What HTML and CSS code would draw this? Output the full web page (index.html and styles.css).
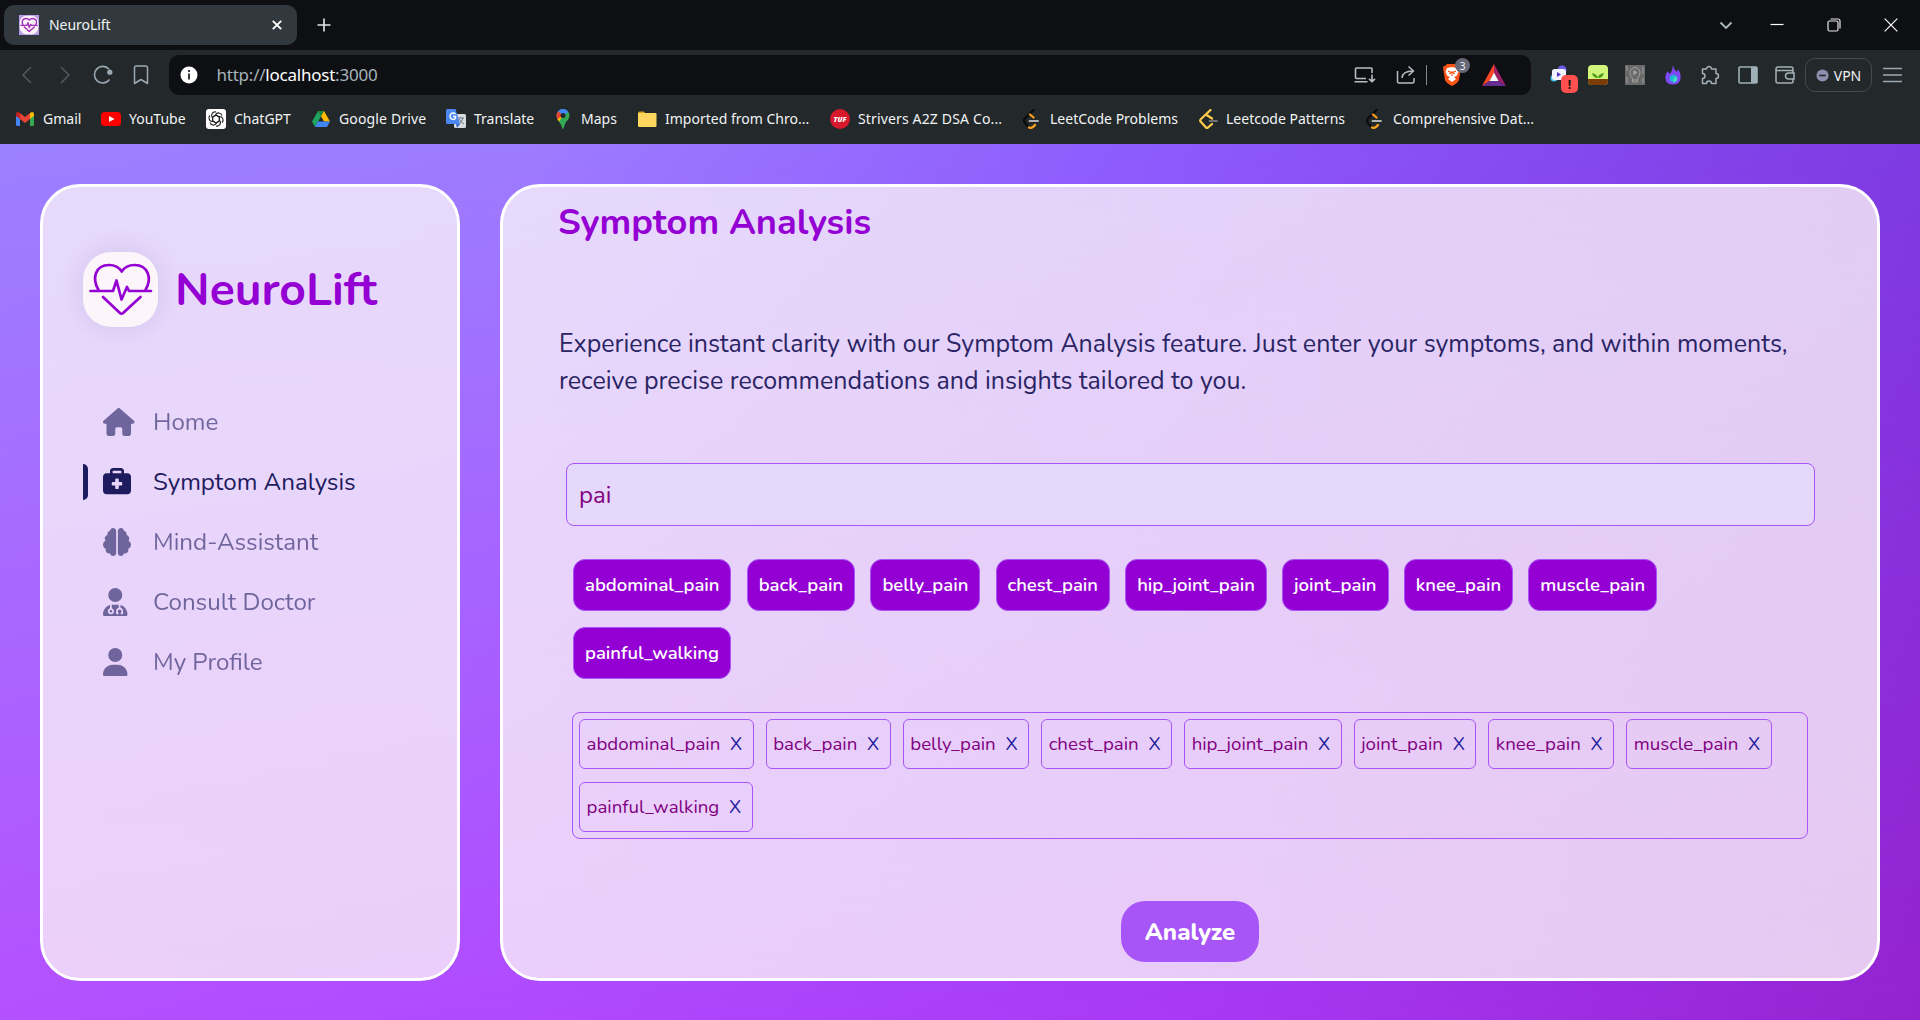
FILE: index.html
```html
<!DOCTYPE html>
<html lang="en">
<head>
<meta charset="utf-8">
<title>NeuroLift</title>
<link rel="stylesheet" href="styles.css">
</head>
<body>
<header class="browser">
  <div class="tabstrip">
    <div class="tab">
      <svg class="favicon" viewBox="0 0 75 75"><rect width="75" height="75" fill="#b79be6"/><rect x="3" y="3" width="69" height="69" rx="24" fill="#fbf1f8"/><g fill="none" stroke="#a02bb8" stroke-width="5" stroke-linecap="round" stroke-linejoin="round"><path d="M15.500 38C8.500 26 12.500 13 26 13Q34.500 13 38.700 19.500Q43 13 51.500 13C65 13 69.500 26 62.500 38M7 39H30L33.500 29L38.500 47L44 35L46 39H68M20 45L38.500 62L57.500 45"/></g></svg>
      <span class="tab-title">NeuroLift</span>
      <svg class="tab-close" viewBox="0 0 10 10"><path d="M.8.8L9.200 9.200M9.200.8L.8 9.200" stroke="#fff" stroke-width="1.900"/></svg>
    </div>
    <svg class="new-tab" viewBox="0 0 14 14"><path d="M7 .5V13.500M.5 7H13.500" stroke="#e6e8ea" stroke-width="1.600"/></svg>
    <div class="window-controls">
      <svg viewBox="0 0 14 14"><path d="M1.500 4.500L7 10L12.500 4.500" fill="none" stroke="#a9b6bd" stroke-width="1.900"/></svg>
      <svg viewBox="0 0 14 14"><path d="M.5 6.500H13.500" stroke="#fff" stroke-width="1.200"/></svg>
      <svg viewBox="0 0 14 14" fill="none" stroke="#e8e8e8" stroke-width="1.200"><rect x="1" y="3" width="10" height="10" rx="1.500"/><path d="M3.500 1H11A2 2 0 0 1 13 3V10.500"/></svg>
      <svg viewBox="0 0 14 14"><path d="M.7.7L13.300 13.300M13.300.7L.7 13.300" stroke="#fff" stroke-width="1.200"/></svg>
    </div>
  </div>

  <div class="toolbar">
    <div class="nav-buttons">
      <svg viewBox="0 0 20 20"><path d="M14 2L6 10L14 18" fill="none" stroke="#51595e" stroke-width="1.500"/></svg>
      <svg viewBox="0 0 20 20"><path d="M6 2L14 10L6 18" fill="none" stroke="#51595e" stroke-width="1.500"/></svg>
      <svg viewBox="0 0 20 20"><path d="M16.500 14.500A8.300 8.300 0 1 1 16 4.200" fill="none" stroke="#9aa9b1" stroke-width="1.600"/><circle cx="16.800" cy="7.200" r="2.600" fill="#9aa9b1"/></svg>
      <svg viewBox="0 0 20 20"><path d="M3.500 3Q3.500 1 5.500 1H14.500Q16.500 1 16.500 3V18.500L10 14.500L3.500 18.500Z" fill="none" stroke="#9aa9b1" stroke-width="1.500" stroke-linejoin="round"/></svg>
    </div>
    <div class="address">
      <svg class="info" viewBox="0 0 18 18"><circle cx="9" cy="9" r="8.500" fill="#fff"/><path d="M9 4V6M9 7.500V13.500" stroke="#23282b" stroke-width="1.800"/></svg>
      <span class="url">http://<b>localhost</b>:3000</span>
      <svg class="act-install" viewBox="0 0 22 20" fill="none" stroke="#b9bcc2" stroke-width="1.600"><path d="M12 13.500H2.500Q1.500 13.500 1.500 12.500V4Q1.500 3 2.500 3H17Q18 3 18 4V8M.500 16.700H13.500M18 9.500V16.500M15 13.800L18 16.700L21 13.800"/></svg>
      <svg class="act-share" viewBox="0 0 20 20" fill="none" stroke="#b9bcc2" stroke-width="1.500"><path d="M1.500 6V16.500Q1.500 18 3 18H16.500Q18 18 18 16.500V13M6 13Q6.500 6 17 6M12.500 1.500L17.500 6L12.500 10.500"/></svg>
      <span class="divider"></span>
      <span class="shield"><svg viewBox="0 0 20 24"><path d="M5 1H15L17 3L19 3.500L18.500 8L17 17Q16 20 10 23Q4 20 3 17L1.500 8L1 3.500L3 3Z" fill="#fb5216"/><path d="M10 4L15 5L16.500 9L14.500 13L12 14L14 16L10 19L6 16L8 14L5.500 13L3.500 9L5 5Z" fill="#fff"/><path d="M6 8L9 9.500L7.500 11M14 8L11 9.500L12.500 11M10 8V13" stroke="#fb5216" fill="none" stroke-width="1.100"/></svg><i>3</i></span>
      <svg class="act-bat" viewBox="0 0 24 22"><path d="M12 0L0 22L7.500 17L12 8.500Z" fill="#ff4724"/><path d="M12 0L24 22L16.500 17L12 8.500Z" fill="#9e1f63"/><path d="M0 22H24L16.500 17H7.500Z" fill="#662d91"/><path d="M12 8.500L16.500 17H7.500Z" fill="#fff"/></svg>
    </div>
    <div class="extensions">
      <span class="ext-alert"><svg viewBox="0 0 20 20"><circle cx="12" cy="5" r="4.500" fill="#6b5cf0"/><circle cx="4" cy="13" r="3.500" fill="#4fc3f2"/><rect x="2" y="4" width="14" height="11" rx="2.500" fill="#f1f3ff"/><path d="M7 7L11 9.500L7 12Z" fill="#5632c9"/></svg><i>!</i></span>
      <svg viewBox="0 0 20 20"><rect width="20" height="20" rx="4" fill="#d0f57a"/><path d="M0 14H20V16Q20 20 16 20H4Q0 20 0 16Z" fill="#7a3d08"/><path d="M10 13Q9 9 4 8Q5 13 10 13Q10 9 16 8Q15 13 10 13Z" fill="#4a9a1c"/></svg>
      <svg viewBox="0 0 20 20"><rect width="20" height="20" fill="#6b6a6a"/><g fill="none" stroke="#a19f9f"><path d="M7.500 13.500Q5 11 5 7.500A5 5 0 0 1 15 7.500Q15 11 12.500 13.500V17H7.500ZM7.500 15H12.500M2 1V6M2 12V18M18 2V9M18 13V18"/><path d="M8.800 5.500V9.500L12 7.500Z" fill="#a19f9f"/></g></svg>
      <svg viewBox="0 0 20 22"><path d="M9.500 0Q10.500 4 14 7.500Q15.500 6 15.500 4Q19 9 18.500 14Q17.500 21.500 10 21.500Q2 21.500 1.500 14Q1.500 10 4 7Q5 9 6.500 9.500Q10 6 9.500 0Z" fill="#7f48f5"/><path d="M10.500 10.500L14.500 12.500V17L10.500 19.500L6.500 17V12.500Z" fill="#22b6d6"/><path d="M10.500 14.500L14.500 12.500V17L10.500 19.500Z" fill="#42e0c4"/></svg>
      <svg viewBox="0 0 20 20"><path d="M3.500 4H6.500A2.500 2.500 0 1 1 11.500 4H16V8.500A2.500 2.500 0 1 1 16 13.500V18.500H11.500A2.500 2.500 0 0 0 6.500 18.500H2.500V13.500A2.500 2.500 0 0 0 2.500 8.500V4Z" fill="none" stroke="#a3b0b7" stroke-width="1.500" stroke-linejoin="round"/></svg>
      <svg viewBox="0 0 20 20"><rect x="1" y="2" width="18" height="16" rx="1" fill="none" stroke="#9fb0b8" stroke-width="1.600"/><path d="M13 2H19V18H13Z" fill="#9fb0b8"/></svg>
      <svg viewBox="0 0 20 20" fill="none" stroke="#a3b0b7" stroke-width="1.500"><path d="M18 6V4Q18 2 16 2H3Q1 2 1 4V16Q1 18 3 18H16Q18 18 18 16.500V14M1 5.500H16Q18 5.500 18 7V8M19 8H13.500A3 3 0 0 0 13.500 14H19Z"/></svg>
    </div>
    <div class="vpn"><svg viewBox="0 0 14 14"><circle cx="7" cy="7" r="6.500" fill="#8e8fae"/><path d="M3.500 7H10.500" stroke="#23282b" stroke-width="1.800"/></svg><span>VPN</span></div>
    <svg class="menu" viewBox="0 0 20 16"><path d="M0 1.500H19M0 8H19M0 14.500H19" stroke="#9aa9b1" stroke-width="1.500"/></svg>
  </div>

  <nav class="bookmarks">
    <a><svg viewBox="0 0 20 20"><path d="M1 4.500V15.500Q1 17 2.500 17H5V9Z" fill="#4285f4"/><path d="M19 4.500V15.500Q19 17 17.500 17H15V9Z" fill="#34a853"/><path d="M1 5Q1 3 3 3L5 4V10L1 7Z" fill="#c5221f"/><path d="M19 5Q19 3 17 3L15 4V10L19 7Z" fill="#fbbc04"/><path d="M5 4L10 8L15 4V10L10 14L5 10Z" fill="#ea4335"/></svg><span>Gmail</span></a>
    <a><svg viewBox="0 0 20 20"><rect y="3" width="20" height="14" rx="3.500" fill="#f00"/><path d="M8 7L13.500 10L8 13Z" fill="#fff"/></svg><span>YouTube</span></a>
    <a><svg viewBox="0 0 20 20"><rect width="20" height="20" rx="3" fill="#fff"/><g fill="none" stroke="#222" stroke-width="1.100"><path d="M10 6L6.700 7.900V12.500A3.500 3.500 0 0 1 4 6.500"/><path d="M10 6L6.700 7.900V12.500A3.500 3.500 0 0 1 4 6.500" transform="rotate(60 10 10)"/><path d="M10 6L6.700 7.900V12.500A3.500 3.500 0 0 1 4 6.500" transform="rotate(120 10 10)"/><path d="M10 6L6.700 7.900V12.500A3.500 3.500 0 0 1 4 6.500" transform="rotate(180 10 10)"/><path d="M10 6L6.700 7.900V12.500A3.500 3.500 0 0 1 4 6.500" transform="rotate(240 10 10)"/><path d="M10 6L6.700 7.900V12.500A3.500 3.500 0 0 1 4 6.500" transform="rotate(300 10 10)"/></g></svg><span>ChatGPT</span></a>
    <a><svg viewBox="0 0 20 20"><path d="M7 2L1 12.500L4 18L10 7.500Z" fill="#1ea362"/><path d="M7 2H13L19 12.500H13Z" fill="#ffba00"/><path d="M7 12.500H19L16 18H4Z" fill="#4285f4"/><path d="M7 2H13L10 7.500Z" fill="#11843f"/></svg><span class="wide">Google Drive</span></a>
    <a><svg viewBox="0 0 20 20"><rect x="8" y="5" width="12" height="14" rx="1.500" fill="#d7dade"/><path d="M12 9H18M15 8V9M17 9Q16 13 12.500 15M13 10Q14.500 13 18 15" stroke="#6c7b86" fill="none"/><path d="M1.500 0H9.500L14 15H1.500Q0 15 0 13.500V1.500Q0 0 1.500 0Z" fill="#4a88f0"/><path d="M9.500 5A3.200 3.200 0 1 0 9.500 9.500V7.500H7" stroke="#fff" stroke-width="1.400" fill="none"/><path d="M10 15H14L11 19Z" fill="#3766cc"/></svg><span>Translate</span></a>
    <a><svg viewBox="0 0 20 20"><path d="M10 0A6.500 6.500 0 0 1 16.500 6.500Q16.500 9.500 13 13Q11.300 16 10.800 19Q10 21 9.200 19Q8.500 16 6 12.500Q3.500 9.500 3.500 6.500A6.500 6.500 0 0 1 10 0Z" fill="#34a853"/><path d="M10 6.500L5 2.300A6.500 6.500 0 0 1 15.500 3Z" fill="#4285f4"/><path d="M5 2.300L10 6.500L5.500 12Q3.500 9.500 3.500 6.500Q3.500 4 5 2.300Z" fill="#ea4335"/><path d="M4.500 10L10 6.500L6 12.500Z" fill="#fbbc04"/><circle cx="10" cy="6.500" r="2.500" fill="#23282b"/></svg><span>Maps</span></a>
    <a><svg viewBox="0 0 20 20"><path d="M1 4Q1 2.500 2.500 2.500H7L9 5H1Z" fill="#d8a01d"/><rect x="1" y="4" width="18.500" height="14" rx="1.200" fill="#ffd75e"/></svg><span>Imported from Chro...</span></a>
    <a><svg viewBox="0 0 20 20"><circle cx="10" cy="10" r="10" fill="#d7192d"/><text class="tuf" x="10" y="12.700" text-anchor="middle">TUF</text></svg><span class="wide">Strivers A2Z DSA Co...</span></a>
    <a><svg viewBox="0 0 20 20" fill="none" stroke-width="2.300" stroke-linecap="round"><path d="M11.500 1L3 9.500Q1 11.500 3 14L6 17.500" stroke="#0b0b0b"/><path d="M8 5.500L11.500 8.500M7 18.500Q10 20 13 16" stroke="#f89f1b"/><path d="M7.500 12H16" stroke="#b3b3b3" stroke-width="1.900"/></svg><span>LeetCode Problems</span></a>
    <a><svg viewBox="0 0 20 20" fill="none" stroke-width="2.300" stroke-linecap="round" stroke-linejoin="round"><path d="M12.500 1L3 10Q1.500 11.500 3 13L8 18.500Q9 19.500 10 18.500L14 15M8 5.500L14 9.500" stroke="#ffc94a"/><path d="M11.500 12H19" stroke="#8c8c8c" stroke-width="1.700"/></svg><span>Leetcode Patterns</span></a>
    <a><svg viewBox="0 0 20 20" fill="none" stroke-width="2.300" stroke-linecap="round"><path d="M11.500 1L3 9.500Q1 11.500 3 14L6 17.500" stroke="#0b0b0b"/><path d="M8 5.500L11.500 8.500M7 18.500Q10 20 13 16" stroke="#f89f1b"/><path d="M7.500 12H16" stroke="#b3b3b3" stroke-width="1.900"/></svg><span>Comprehensive Dat...</span></a>
  </nav>
</header>

<div class="app">
  <aside class="sidebar">
    <div class="brand">
      <div class="logo"><svg viewBox="0 0 75 75" fill="none" stroke="#9400d3" stroke-width="2.700" stroke-linecap="round" stroke-linejoin="round"><path d="M15.500 38C8.500 26 12.500 13 26 13Q34.500 13 38.700 19.500Q43 13 51.500 13C65 13 69.500 26 62.500 38"/><path d="M7.500 39H30L33.500 28.500L38.500 47.500L44 35L46 39H68M20 45L37.200 61.300Q38.500 62.300 39.800 61.300L57.500 45"/></svg></div>
      <span class="brand-name">NeuroLift</span>
    </div>
    <ul class="menu-list">
      <li><svg viewBox="0 0 576 512"><path d="M575.8 255.500c0 18-15 32.100-32 32.100h-32l.7 160.200c0 2.700-.2 5.400-.5 8.100V472c0 22.100-17.900 40-40 40H456c-1.100 0-2.200 0-3.300-.1c-1.400 .1-2.800 .1-4.200 .1H416 392c-22.100 0-40-17.900-40-40V448 384c0-17.700-14.300-32-32-32H256c-17.700 0-32 14.300-32 32v64 24c0 22.100-17.900 40-40 40H160 128.100c-1.500 0-3-.1-4.500-.2c-1.200 .1-2.400 .2-3.600 .2H104c-22.100 0-40-17.900-40-40V360c0-.9 0-1.900 .1-2.800V287.600H32c-18 0-32-14-32-32.100c0-9 3-17 10-24L266.400 8c7-7 15-8 22-8s15 2 21 7L564.800 231.500c8 7 12 15 11 24z"/></svg><span>Home</span></li>
      <li class="active"><svg viewBox="0 0 512 512"><path d="M184 48H328c4.400 0 8 3.600 8 8V96H176V56c0-4.400 3.600-8 8-8zm-56 8V96H64C28.700 96 0 124.700 0 160V416c0 35.300 28.700 64 64 64H448c35.300 0 64-28.700 64-64V160c0-35.300-28.700-64-64-64H384V56c0-30.900-25.100-56-56-56H184c-30.900 0-56 25.100-56 56zm96 152c0-8.800 7.200-16 16-16h32c8.800 0 16 7.200 16 16v48h48c8.800 0 16 7.200 16 16v32c0 8.800-7.200 16-16 16H288v48c0 8.800-7.200 16-16 16H240c-8.800 0-16-7.200-16-16V320H176c-8.800 0-16-7.200-16-16V272c0-8.800 7.200-16 16-16h48V208z"/></svg><span>Symptom Analysis</span></li>
      <li><svg viewBox="0 0 512 512"><path d="M184 0c30.900 0 56 25.100 56 56V456c0 30.900-25.100 56-56 56c-28.900 0-52.700-21.900-55.700-50.100c-5.200 1.400-10.700 2.100-16.300 2.100c-35.300 0-64-28.700-64-64c0-7.400 1.300-14.600 3.600-21.200C21.400 367.400 0 338.200 0 304c0-31.900 18.700-59.500 45.800-72.300C37.100 220.800 32 207 32 192c0-30.700 21.600-56.300 50.400-62.600C80.800 123.900 80 118 80 112c0-29.900 20.600-55.100 48.300-62.100C131.300 21.900 155.100 0 184 0zM328 0c28.900 0 52.600 21.900 55.700 49.900c27.800 7 48.300 32.100 48.300 62.100c0 6-.8 11.900-2.400 17.400c28.800 6.200 50.400 31.900 50.400 62.600c0 15-5.100 28.800-13.800 39.700C493.300 244.500 512 272.100 512 304c0 34.200-21.400 63.400-51.600 74.800c2.300 6.600 3.600 13.800 3.600 21.200c0 35.300-28.700 64-64 64c-5.600 0-11.100-.7-16.300-2.100c-3 28.200-26.800 50.100-55.700 50.100c-30.900 0-56-25.100-56-56V56c0-30.900 25.100-56 56-56z"/></svg><span>Mind-Assistant</span></li>
      <li><svg viewBox="0 0 448 512"><path d="M224 256a128 128 0 1 0 0-256 128 128 0 1 0 0 256zm-96 55.200C54 332.900 0 401.300 0 482.300C0 498.700 13.300 512 29.700 512H418.300c16.400 0 29.700-13.300 29.700-29.700c0-81-54-149.400-128-171.100V362c27.600 7.100 48 32.200 48 62v40c0 8.800-7.200 16-16 16H336c-8.800 0-16-7.200-16-16s7.200-16 16-16V424c0-17.700-14.300-32-32-32s-32 14.300-32 32v24c8.800 0 16 7.200 16 16s-7.200 16-16 16H256c-8.800 0-16-7.200-16-16V424c0-29.800 20.400-54.900 48-62V304.900c-6-.6-12.100-.9-18.300-.9H178.300c-6.200 0-12.300 .3-18.300 .9v65.400c23.100 6.900 40 28.300 40 53.700c0 30.900-25.100 56-56 56s-56-25.100-56-56c0-25.400 16.900-46.800 40-53.700V311.200zM144 448a24 24 0 1 0 0-48 24 24 0 1 0 0 48z"/></svg><span>Consult Doctor</span></li>
      <li><svg viewBox="0 0 448 512"><path d="M224 256A128 128 0 1 0 224 0a128 128 0 1 0 0 256zm-45.700 48C79.800 304 0 383.800 0 482.300C0 498.700 13.300 512 29.700 512H418.300c16.400 0 29.700-13.300 29.700-29.700C448 383.800 368.200 304 269.700 304H178.300z"/></svg><span>My Profile</span></li>
    </ul>
  </aside>

  <main class="panel">
    <h1>Symptom Analysis</h1>
    <p class="intro"><span>Experience instant clarity with our Symptom Analysis feature. Just enter your symptoms, and within moments,</span><br><span>receive precise recommendations and insights tailored to you.</span></p>
    <input class="search" type="text" value="pai">
    <div class="suggestions">
      <button>abdominal_pain</button><button>back_pain</button><button>belly_pain</button><button>chest_pain</button><button>hip_joint_pain</button><button>joint_pain</button><button>knee_pain</button><button>muscle_pain</button><button>painful_walking</button>
    </div>
    <div class="selected">
      <div class="tag"><span>abdominal_pain</span><b>X</b></div><div class="tag"><span>back_pain</span><b>X</b></div><div class="tag"><span>belly_pain</span><b>X</b></div><div class="tag"><span>chest_pain</span><b>X</b></div><div class="tag"><span>hip_joint_pain</span><b>X</b></div><div class="tag"><span>joint_pain</span><b>X</b></div><div class="tag"><span>knee_pain</span><b>X</b></div><div class="tag"><span>muscle_pain</span><b>X</b></div><div class="tag"><span>painful_walking</span><b>X</b></div>
    </div>
    <button class="analyze">Analyze</button>
  </main>
</div>
</body>
</html>
```
FILE: styles.css
```css
* { box-sizing: border-box; }
body {
  margin: 0;
  height: 1020px;
  display: flex;
  flex-direction: column;
  overflow: hidden;
  font-family: Nunito, Lato, "Open Sans", sans-serif;
}
svg { display: block; flex: none; }

/* Browser chrome */
.browser {
  height: 144px;
  background: #23282b;
  color: #f2f3f4;
  font: 14px "Noto Sans", "Open Sans", sans-serif;
}
.tabstrip {
  height: 50px;
  padding: 5px 22px 5px 4px;
  display: flex;
  align-items: center;
  background: #0e0f13;
}
.tab {
  width: 293px;
  height: 40px;
  padding: 0 15px;
  display: flex;
  align-items: center;
  gap: 10px;
  border-radius: 10px;
  background: #31393e;
}
.favicon { width: 20px; height: 20px; }
.tab-title { flex: 1; padding-bottom: 2px; letter-spacing: -.05px; }
.tab-close { width: 10px; height: 10px; }
.new-tab { width: 14px; height: 14px; margin-left: 20px; }
.window-controls { margin-left: auto; display: flex; }
.window-controls svg { width: 14px; height: 14px; margin-left: 43px; }
.window-controls svg:first-child { margin-left: 0; }
.window-controls svg:nth-child(2) { margin-left: 37px; }

.toolbar { height: 50px; padding-left: 17px; display: flex; align-items: center; }
.nav-buttons { width: 152px; display: flex; gap: 18px; }
.nav-buttons svg { width: 20px; height: 20px; }
.address {
  width: 1362px;
  height: 40px;
  padding: 0 25px 0 11px;
  display: flex;
  align-items: center;
  border-radius: 10px;
  background: #0e0f13;
}
.info { width: 18px; height: 18px; }
.url { margin-left: 18.500px; flex: 1; padding-bottom: 2px; font-size: 17px; letter-spacing: -.23px; color: #a5b3ba; }
.url b { font-weight: 400; color: #fff; }
.act-install { width: 22px; height: 20px; }
.act-share { width: 20px; height: 20px; margin-left: 20px; }
.divider { width: 1px; height: 20px; margin-left: 10px; background: #83868c; }
.shield { position: relative; margin-left: 15px; }
.shield svg { width: 20px; height: 24px; }
.shield i, .ext-alert i {
  position: absolute;
  display: flex;
  align-items: center;
  justify-content: center;
  font-style: normal;
}
.shield i { left: 13px; top: -5px; width: 15px; height: 15px; border-radius: 8px; background: #666878; font-size: 10px; }
.act-bat { width: 24px; height: 22px; margin-left: 20px; }
.extensions { margin-left: 19px; display: flex; align-items: center; gap: 17.500px; }
.extensions svg { width: 20px; height: 20px; }
.ext-alert { position: relative; }
.ext-alert i { left: 11px; top: 10px; width: 17px; height: 18px; border-radius: 5px; background: #ff4f4f; color: #101010; font-size: 12px; font-weight: 700; }
.vpn {
  width: 67px;
  height: 34px;
  margin-left: 10px;
  display: flex;
  align-items: center;
  justify-content: center;
  gap: 5px;
  border: 1px solid #414b50;
  border-radius: 10px;
}
.vpn svg { width: 13px; height: 13px; }
.menu { width: 20px; height: 16px; margin-left: 11px; }
.bookmarks {
  height: 38px;
  padding-left: 15px;
  display: grid;
  grid-template-columns: 86px 105px 105px 135px 107px 84px 193px 192px 176px 167px 170px;
  align-items: center;
}
.bookmarks a { display: flex; align-items: center; gap: 8px; white-space: nowrap; letter-spacing: 0; }
.bookmarks span { padding-bottom: 2px; }
.bookmarks .wide { letter-spacing: .15px; }
.bookmarks svg { width: 20px; height: 20px; }
.tuf { font: italic 900 7px "Open Sans", sans-serif; fill: #fff; }

/* Page */
.app {
  position: relative;
  z-index: 0;
  flex: 1;
  padding: 40px 40px 39px;
  display: flex;
  gap: 40px;
  background: linear-gradient(97deg, #9c80ff, #9d7cff 26%, #8c58fc 60%, #7c37de);
}
.app::before {
  content: "";
  position: absolute;
  inset: 0;
  z-index: -1;
  background: linear-gradient(97deg, #b552ff, #b04aff 30%, #a838f4 65%, #9522d0);
  mask-image: linear-gradient(to bottom, transparent, #000);
}
.sidebar, .panel {
  border: 3px solid #fff;
  border-radius: 40px;
  background: rgba(255, 250, 250, .75);
}
.panel { background: linear-gradient(97deg, rgba(255, 250, 250, .75) 30%, rgba(255, 250, 250, .77)); }
.sidebar { width: 420px; padding: 65px 40px; }
.brand { display: flex; align-items: center; gap: 17px; }
.logo {
  width: 75px;
  height: 75px;
  border-radius: 28px;
  background: #fcf5f9;
  box-shadow: 0 0 25px rgba(90, 60, 160, .14);
}
.brand-name { padding-top: 1px; color: #9400d3; font-size: 46.300px; font-weight: 700; line-height: 60px; }
.menu-list { margin: 65px 0 0; padding: 0; list-style: none; }
.menu-list li {
  height: 60px;
  padding-left: 20px;
  display: grid;
  grid-template-columns: 50px 1fr;
  align-items: center;
  color: #1e1b5e;
  fill: #1e1b5e;
  font-size: 24.200px;
}
.menu-list li > * { opacity: .6; }
.menu-list .active > * { opacity: 1; }
.menu-list svg { height: 28px; }
.menu-list .active { padding-left: 0; grid-template-columns: 20px 50px 1fr; }
.menu-list .active::before {
  content: "";
  width: 5px;
  height: 36px;
  border-radius: 0 5px 5px 0;
  background: #1e1b5e;
}

.panel { flex: 1; padding: 8px 55px 0; display: flex; flex-direction: column; }
h1 { margin: 0; color: #9400d3; font-size: 36.200px; font-weight: 700; line-height: 54px; }
.intro { margin: 77px 0 0 1px; color: #2a2464; font-size: 25px; line-height: 37px; white-space: nowrap; }
.search {
  width: 1249px;
  height: 63px;
  margin: 63px 0 0 8px;
  padding: 0 12px;
  border: 1px solid #a855f7;
  border-radius: 8px;
  background: #e6d8fa;
  color: #800080;
  font: 24px Nunito, Lato, sans-serif;
  outline: 0;
}
.suggestions { margin: 33px 0 0 15px; display: flex; flex-wrap: wrap; gap: 15.500px 15.200px; }
.suggestions button {
  height: 52px;
  padding: 0 11px;
  border: 1px solid #a855f7;
  border-radius: 12px;
  background: #9400d3;
  color: #fff;
  font: 600 18.500px Nunito, Lato, sans-serif;
}
.selected {
  width: 1236px;
  height: 127px;
  margin: 33px 0 0 14px;
  padding: 6px;
  display: flex;
  flex-wrap: wrap;
  align-content: flex-start;
  gap: 13px 12px;
  border: 1px solid #a855f7;
  border-radius: 8px;
}
.tag {
  height: 50px;
  padding: 0 10.500px 0 6.500px;
  display: flex;
  align-items: center;
  gap: 9.800px;
  border: 1px solid #a855f7;
  border-radius: 6px;
  color: #800080;
  font-size: 18.700px;
}
.tag b { color: #1c1c9c; font-weight: inherit; }
.analyze {
  width: 138px;
  height: 61px;
  margin: 62px 0 0 563px;
  padding-top: 3px;
  border: 0;
  border-radius: 24px;
  background: #a855f7;
  color: #fff;
  font: 800 24px Nunito, Lato, sans-serif;
}
```
